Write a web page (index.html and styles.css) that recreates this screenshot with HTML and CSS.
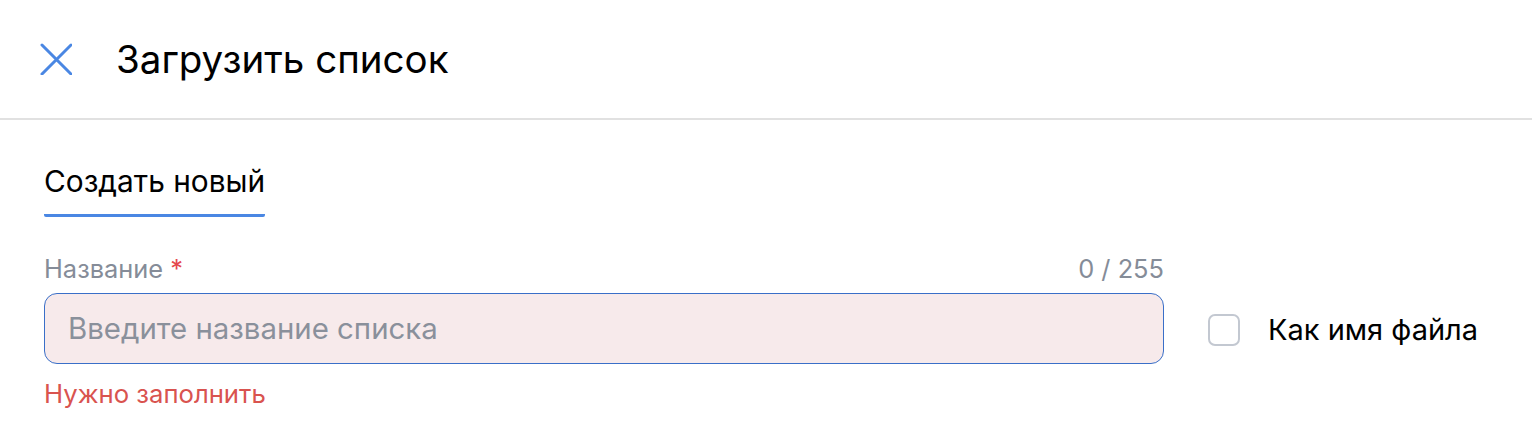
FILE: index.html
```html
<!DOCTYPE html>
<html lang="ru">
<head>
<meta charset="utf-8">
<link rel="stylesheet" href="styles.css">
</head>
<body>
<header class="header">
  <button class="close" aria-label="Закрыть">
    <svg width="32" height="32" viewBox="0 0 32 32"><path d="M2 2L31 31M31 2L2 31" stroke="#4a87e3" stroke-width="3" stroke-linecap="round" fill="none"/></svg>
  </button>
  <h1 class="title">Загрузить список</h1>
</header>
<main class="content">
  <nav class="tabs">
    <div class="tab active">Создать новый</div>
  </nav>
  <div class="form-row">
    <div class="field">
      <div class="field-head">
        <span class="label">Название <span class="req">*</span></span>
        <span class="counter">0 / 255</span>
      </div>
      <div class="input">Введите название списка</div>
      <div class="error">Нужно заполнить</div>
    </div>
    <label class="check">
      <span class="box"></span>
      <span class="check-label">Как имя файла</span>
    </label>
  </div>
</main>
</body>
</html>
```
FILE: styles.css
```css
* { box-sizing: border-box; }
body {
  margin: 0;
  background: #fff;
  font-family: Inter, "Noto Sans", sans-serif;
  color: #000;
}
.header {
  height: 120px;
  display: flex;
  align-items: center;
  padding-left: 40px;
  border-bottom: 2px solid #e1e1e1;
}
.close {
  border: 0;
  background: none;
  padding: 0;
  width: 32px;
  height: 32px;
  display: flex;
}
.title {
  margin: 0 0 0 44px;
  font-size: 38.5px;
  font-weight: 400;
}
.content {
  padding: 0 44px;
}
.tabs {
  display: flex;
  padding-top: 44px;
}
.tab {
  font-size: 29.8px;
  line-height: 34px;
  padding-bottom: 16px;
  border-bottom: 3px solid #4a87e3;
  border-radius: 0 0 2px 2px;
}
.form-row {
  display: flex;
  align-items: flex-start;
  margin-top: 38px;
}
.field {
  width: 1120px;
}
.field-head {
  display: flex;
  justify-content: space-between;
  font-size: 25.4px;
  line-height: 28px;
  color: #858c98;
}
.req { color: #e5484d; }
.input {
  margin-top: 10px;
  height: 71px;
  border: 1px solid #3a6fc8;
  border-radius: 13px;
  background: #f7eaeb;
  font-size: 29.4px;
  color: #8a909b;
  display: flex;
  align-items: center;
  padding-left: 23px;
}
.error {
  margin-top: 15px;
  font-size: 25.7px;
  line-height: 30px;
  color: #d9534f;
}
.check {
  display: flex;
  align-items: center;
  margin-left: 44px;
  margin-top: 57px;
}
.box {
  width: 32px;
  height: 32px;
  border: 2.5px solid #c3c8d1;
  border-radius: 7px;
}
.check-label {
  margin-left: 28px;
  font-size: 29px;
}
```
